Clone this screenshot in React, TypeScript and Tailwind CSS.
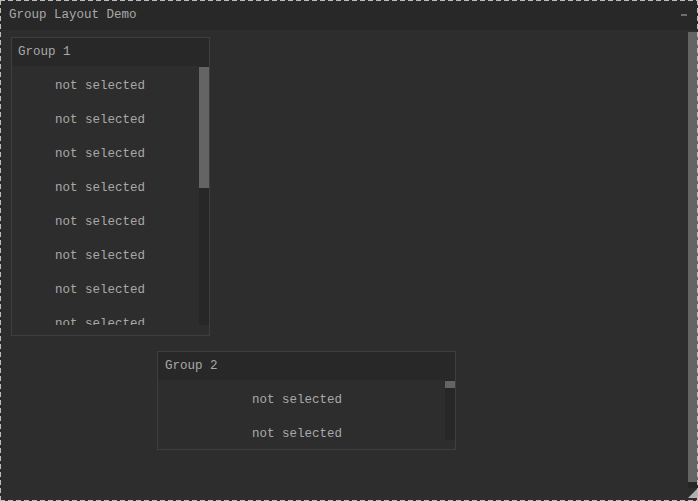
import React from "react";

const font = { fontFamily: '"Liberation Mono", "DejaVu Sans Mono", monospace' };

function Item({ w }: { w: string }) {
  return (
    <div className={`h-[30px] shrink-0 flex items-center justify-center ml-[3px] ${w} text-[12.5px] text-[#a9a9a9] whitespace-nowrap`}>
      not selected
    </div>
  );
}

export default function App() {
  const items1 = Array.from({ length: 8 });
  const items2 = Array.from({ length: 2 });
  return (
    <div className="relative w-[698px] h-[501px] bg-[#2d2d2d] overflow-hidden" style={font}>
      {/* header */}
      <div className="h-[30px] bg-[#282828] flex items-center justify-between pl-[9px]">
        <span className="text-[12.5px] text-[#a9a9a9] leading-none">Group Layout Demo</span>
        <div className="w-[6px] h-[2px] bg-[#6e6e6e] mr-[11px] mb-[1px]" />
      </div>
      {/* body */}
      <div className="flex h-[471px]">
        <div className="flex-1 flex flex-col">
          {/* Group 1 */}
          <div className="ml-[11px] mt-[7px] w-[199px] h-[299px] shrink-0 border border-[#3e3e3e] flex flex-col">
            <div className="h-[28px] shrink-0 bg-[#282828] flex items-center pl-[6px] text-[12.5px] text-[#a9a9a9]">
              Group 1
            </div>
            <div className="h-[259px] shrink-0 flex">
              <div className="flex-1 overflow-hidden pt-[5px] flex flex-col gap-[4px]">
                {items1.map((_, i) => (
                  <Item key={i} w="w-[170px]" />
                ))}
              </div>
              <div className="w-[10px] bg-[#272727] pt-[1px]">
                <div className="h-[121px] bg-[#646464]" />
              </div>
            </div>
          </div>
          {/* Group 2 */}
          <div className="ml-[157px] mt-[15px] w-[299px] h-[99px] shrink-0 border border-[#3e3e3e] flex flex-col">
            <div className="h-[28px] shrink-0 bg-[#282828] flex items-center pl-[7px] text-[12.5px] text-[#a9a9a9]">
              Group 2
            </div>
            <div className="h-[60px] shrink-0 flex">
              <div className="flex-1 overflow-hidden pt-[5px] flex flex-col gap-[4px]">
                {items2.map((_, i) => (
                  <Item key={i} w="w-[272px]" />
                ))}
              </div>
              <div className="w-[10px] bg-[#272727] pt-[1px]">
                <div className="h-[7px] bg-[#646464]" />
              </div>
            </div>
          </div>
        </div>
        {/* window scrollbar */}
        <div className="w-[10px] flex flex-col">
          <div className="h-[2px] shrink-0" />
          <div className="h-[450px] shrink-0 bg-[#646464]" />
          <div className="h-[6px] shrink-0 bg-[#262626]" />
          <div className="flex-1 flex items-start">
            <svg width="10" height="10" viewBox="0 0 10 10">
              <polygon points="10,0 10,10 0,10" fill="#b0b0b0" />
            </svg>
          </div>
        </div>
      </div>
      {/* dashed frame */}
      <div className="absolute left-0 right-0 top-0 h-px bg-[repeating-linear-gradient(90deg,#bdbdbd_0_5px,transparent_5px_8px)] pointer-events-none" />
      <div className="absolute left-0 right-0 bottom-0 h-px bg-[repeating-linear-gradient(90deg,#bdbdbd_0_5px,transparent_5px_8px)] pointer-events-none" />
      <div className="absolute top-0 bottom-0 left-0 w-px bg-[repeating-linear-gradient(180deg,#bdbdbd_0_5px,transparent_5px_8px)] pointer-events-none" />
      <div className="absolute top-0 bottom-0 right-0 w-px bg-[repeating-linear-gradient(180deg,#bdbdbd_0_5px,transparent_5px_8px)] pointer-events-none" />
    </div>
  );
}
